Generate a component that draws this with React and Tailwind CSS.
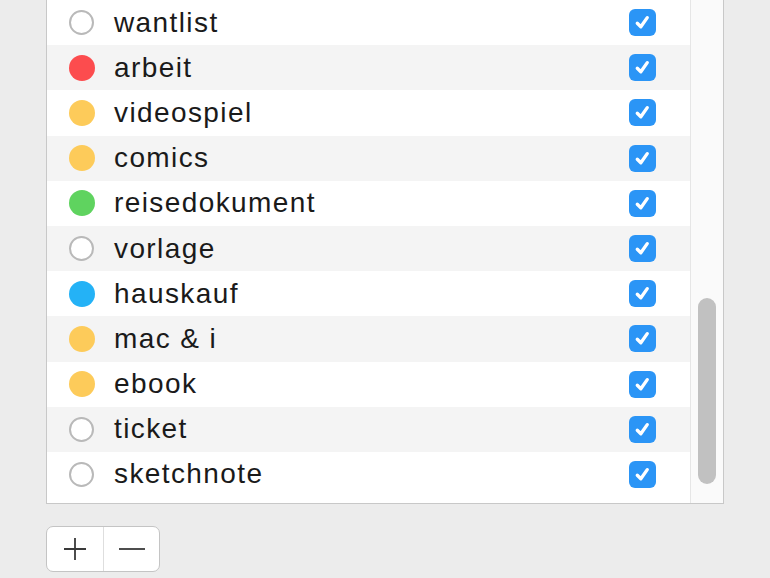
const tags = [
  { name: "wantlist", color: null },
  { name: "arbeit", color: "#fc4c4e" },
  { name: "videospiel", color: "#fdcb5a" },
  { name: "comics", color: "#fdcb5a" },
  { name: "reisedokument", color: "#5fd35f" },
  { name: "vorlage", color: null },
  { name: "hauskauf", color: "#24b2f6" },
  { name: "mac & i", color: "#fdcb5a" },
  { name: "ebook", color: "#fdcb5a" },
  { name: "ticket", color: null },
  { name: "sketchnote", color: null },
];

function Dot({ color }) {
  if (!color) {
    return <div className="w-[25px] h-[25px] rounded-full border-2 border-[#b9b9b9] bg-white" />;
  }
  return <div className="w-[26px] h-[26px] rounded-full" style={{ backgroundColor: color }} />;
}

function Check() {
  return (
    <div className="w-[27px] h-[27px] rounded-[6px] bg-[#2b95f6] flex items-center justify-center">
      <svg width="19" height="19" viewBox="0 0 16 16" fill="none">
        <path d="M3.6 8.6 L6.6 11.6 L12 3.9" stroke="white" strokeWidth="2.8" strokeLinecap="round" strokeLinejoin="round" />
      </svg>
    </div>
  );
}

export default function App() {
  return (
    <div className="w-[770px] h-[578px] bg-[#ececec] overflow-hidden relative" style={{ fontFamily: '"Liberation Sans", Arial, sans-serif' }}>
      <div className="absolute left-[46px] top-[-20px] w-[678px] h-[524px] border border-[#c8c8c8] bg-white flex">
        <div className="flex-1 pt-[19px]">
          {tags.map((t, i) => (
            <div
              key={t.name}
              className={`h-[45.2px] flex items-center ${i % 2 === 1 ? "bg-[#f4f4f4]" : "bg-white"}`}
            >
              <div className="w-[68px] flex justify-center pl-[1px]">
                <Dot color={t.color} />
              </div>
              <div className="flex-1 text-[28px] tracking-[0.05em] text-[#1a1a1a] leading-none -ml-[1px]">{t.name}</div>
              <div className="w-[72px] flex justify-start pl-[11px]">
                <Check />
              </div>
            </div>
          ))}
        </div>
        <div className="w-[33px] bg-[#fafafa] border-l border-[#e6e6e6] relative">
          <div className="absolute left-[7px] top-[317px] w-[18px] h-[186px] rounded-full bg-[#c1c1c1]" />
        </div>
      </div>
      <div className="absolute left-[46px] top-[526px] w-[114px] h-[46px] rounded-[7px] border border-[#c4c4c4] bg-white flex">
        <div className="w-[57px] flex items-center justify-center border-r border-[#dedede]">
          <svg width="24" height="24" viewBox="0 0 24 24">
            <path d="M12 1 V23 M1 12 H23" stroke="#3a3a3a" strokeWidth="1.8" />
          </svg>
        </div>
        <div className="flex-1 flex items-center justify-center">
          <svg width="26" height="4" viewBox="0 0 26 4">
            <path d="M0 2 H26" stroke="#3a3a3a" strokeWidth="1.8" />
          </svg>
        </div>
      </div>
    </div>
  );
}
